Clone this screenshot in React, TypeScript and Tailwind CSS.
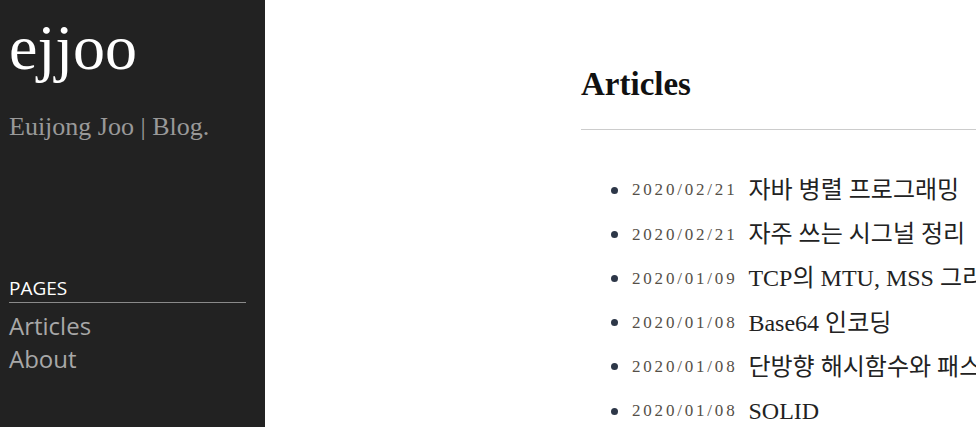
import React from "react";

const serif = { fontFamily: '"Liberation Serif", "Noto Sans CJK KR", serif' };

const posts = [
  { date: "2020/02/21", title: "자바 병렬 프로그래밍" },
  { date: "2020/02/21", title: "자주 쓰는 시그널 정리" },
  { date: "2020/01/09", title: "TCP의 MTU, MSS 그리고 PMTUD" },
  { date: "2020/01/08", title: "Base64 인코딩" },
  { date: "2020/01/08", title: "단방향 해시함수와 패스워드 저장" },
  { date: "2020/01/08", title: "SOLID" },
];

export default function App() {
  return (
    <div className="flex h-[427px] w-[976px] overflow-hidden bg-white">
      <aside className="flex w-[265px] shrink-0 flex-col bg-[#222222] pl-[9px] pr-[19px]">
        <h1
          className="mt-[12px] text-[64px] leading-[72px] text-white"
          style={{ fontFamily: '"Liberation Serif", serif' }}
        >
          ejjoo
        </h1>
        <p
          className="mt-[28px] text-[26px] leading-[30px] text-[#999999]"
          style={{ fontFamily: '"Liberation Serif", serif' }}
        >
          Euijong Joo | Blog.
        </p>
        <div
          className="mt-[134px]"
          style={{ fontFamily: '"Open Sans", sans-serif' }}
        >
          <div className="border-b border-[#8a8a8a] pb-[2px] text-[19px] leading-[24px] text-white">
            PAGES
          </div>
          <nav className="mt-[6px] flex flex-col text-[24px] leading-[33px] text-[#a8a8a8]">
            <a>Articles</a>
            <a>About</a>
          </nav>
        </div>
      </aside>
      <main className="min-w-0 flex-1 pl-[316px]" style={serif}>
        <h2 className="mt-[64px] text-[33px] font-bold leading-[40px] text-[#111]">
          Articles
        </h2>
        <div className="mt-[25px] h-px w-[800px] bg-[#cccccc]" />
        <ul className="mt-[38px]">
          {posts.map((p, i) => (
            <li key={i} className="flex h-[44.2px] items-center whitespace-nowrap">
              <span className="ml-[30px] mr-[14px] h-[7px] w-[7px] shrink-0 rounded-full bg-[#2d3748]" />
              <span className="mr-[11px] text-[17px] tracking-[2.8px] text-[#555048]">
                {p.date}
              </span>
              <span className="text-[24px] text-[#222]">{p.title}</span>
            </li>
          ))}
        </ul>
      </main>
    </div>
  );
}
